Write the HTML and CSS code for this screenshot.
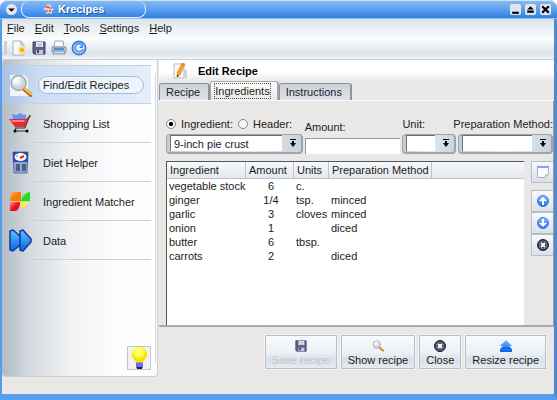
FILE: index.html
```html
<!DOCTYPE html>
<html lang="en">
<head>
<meta charset="utf-8">
<title>Krecipes</title>
<link rel="stylesheet" href="styles.css">
</head>
<body>
<svg class="defs" aria-hidden="true">
  <defs>
    <linearGradient id="blue" x2="0" y2="1"><stop stop-color="#8fc6ff"/><stop offset="1" stop-color="#1f6ce0"/></linearGradient>
    <linearGradient id="arrow" x2="0" y2="1"><stop stop-color="#62c0ff"/><stop offset="1" stop-color="#0a62e8"/></linearGradient>
    <linearGradient id="orange" x2="1" y2="1"><stop stop-color="#ffb080"/><stop offset=".5" stop-color="#ff7a00"/></linearGradient>
    <linearGradient id="green" x2="1" y2="1"><stop stop-color="#c8ffc0"/><stop offset=".5" stop-color="#1fe01f"/></linearGradient>
    <linearGradient id="red" x2="1" y2="1"><stop stop-color="#ff9a9a"/><stop offset=".5" stop-color="#f01010"/></linearGradient>
    <radialGradient id="glass" cx=".4" cy=".35"><stop stop-color="#fff"/><stop offset="1" stop-color="#c9d3d6"/></radialGradient>
    <radialGradient id="bulb" cx=".45" cy=".3"><stop stop-color="#ffffc0"/><stop offset=".6" stop-color="#ffff30"/><stop offset="1" stop-color="#f2e600"/></radialGradient>
    <symbol id="floppy" viewBox="0 0 14 14">
      <path d="M1 1h12v12H2l-1-1z" fill="#5a6288" stroke="#3c4266"/>
      <path d="M4 1h7v5H4z" fill="#e8ebf5"/><path d="M5 3h5M5 5h5" stroke="#a9b0cc"/>
      <path d="M4 9h7v4H4z" fill="#c3c8dc"/><path d="M5 9h2v3H5z" fill="#3c4266"/>
    </symbol>
    <symbol id="magnifier" viewBox="0 0 24 24">
      <path d="M15 15l7 6" stroke="#b86a10" stroke-width="4" stroke-linecap="round"/>
      <path d="M16 15l6 5" stroke="#ffc050" stroke-width="2" stroke-linecap="round"/>
      <circle cx="9.500" cy="9" r="7.500" fill="url(#glass)" stroke="#a3abae" stroke-width="1.500"/>
      <path d="M5 9a5 5 0 0 1 5-5" fill="none" stroke="#fff" stroke-width="2"/>
    </symbol>
    <symbol id="cancel" viewBox="0 0 12 12">
      <circle cx="6" cy="6" r="5.500" fill="#34344e" stroke="#1f1f36"/><circle cx="6" cy="6" r="4" fill="none" stroke="#77778f"/>
      <path d="M4 4l4 4M8 4l-4 4" stroke="#fff" stroke-width="2"/>
    </symbol>
    <symbol id="combo-arrow" viewBox="0 0 8 8"><path d="M1 0h6v1H1zM3 2h2v2h2L4 8 1 4h2z" fill="#000"/></symbol>
  </defs>
</svg>

<div class="window">
  <header class="titlebar">
    <button class="window-menu" aria-label="Window menu"><svg viewBox="0 0 10 10"><path d="M2 4h6L5 7z"/></svg></button>
    <div class="caption">
      <svg viewBox="0 0 11 11"><path d="M3 1l3-1 3 2v2l2 1-2 2v3l-3-1-3 1V7L0 5l3-2z" fill="#f3cfc8"/><path d="M3 2h3v2H3zM6 6h2v2H6z" fill="#d06a58"/><path d="M6 3h3v2H6zM3 6h2v2H3z" fill="#a98ab8"/></svg>
      <h1>Krecipes</h1>
    </div>
    <div class="window-buttons">
      <button aria-label="Minimize"><svg viewBox="0 0 10 10"><path d="M2 7h6v2H2z"/></svg></button>
      <button aria-label="Maximize"><svg viewBox="0 0 10 10"><path d="M5 2l3 3H2zM2 6h6v2H2z"/></svg></button>
      <button aria-label="Close window"><svg viewBox="0 0 10 10"><path d="M2 2l6 6M8 2L2 8" stroke="#000" stroke-width="2"/></svg></button>
    </div>
  </header>

  <div class="bars">
    <nav class="menubar" aria-label="Menu">
      <a href="#"><u>F</u>ile</a><a href="#"><u>E</u>dit</a><a href="#"><u>T</u>ools</a><a href="#"><u>S</u>ettings</a><a href="#"><u>H</u>elp</a>
    </nav>
    <div class="toolbar">
      <span class="grip"></span>
      <button aria-label="New recipe"><svg viewBox="0 0 16 16"><path d="M2 1h8l3 4v10H2z" fill="#f7f9ff" stroke="#a9b0c8"/><path d="M10 1v4h3" fill="#d5dbea" stroke="#a9b0c8"/><circle cx="11" cy="10" r="4" fill="#ffe08a"/><circle cx="11" cy="10" r="2" fill="#f3a62c"/></svg></button>
      <button aria-label="Save"><svg viewBox="0 0 16 16"><use href="#floppy" x="1" y="1" width="14" height="14"/></svg></button>
      <button aria-label="Print"><svg viewBox="0 0 16 16"><path d="M4 1h8l1 6H3z" fill="#f5faff" stroke="#9aa8ba"/><path d="M1 7h14v5H1z" fill="#b9c0ca" stroke="#8d95a1"/><path d="M3 8h10v2H3z" fill="#4d8fd8"/><path d="M3 11h10l1 3H2z" fill="#b9defc" stroke="#8498b0"/></svg></button>
      <button aria-label="Reload"><svg viewBox="0 0 16 16"><circle cx="8" cy="8" r="6.500" fill="#eaf4ff" stroke="#3f80e2" stroke-width="2"/><path d="M11 5a4 4 0 1 0 1 4" fill="none" stroke="#5c9cf0" stroke-width="2"/><path d="M12 4v4H8z" fill="#3f80e2"/></svg></button>
    </div>
  </div>

  <div class="workspace">
    <aside class="sidebar">
      <nav aria-label="Sections">
        <a class="section current" href="#">
          <svg viewBox="0 0 24 24"><path d="M2 2h15l3 4v17H2z" fill="#eef4ff"/><use href="#magnifier" x="1" y="1" width="24" height="24"/></svg>
          <span>Find/Edit Recipes</span></a>
        <a class="section" href="#">
          <svg viewBox="0 0 24 24"><path d="M4 2l5 1 3-2 4 2 2-1v6H5z" fill="#6d94f4"/><path d="M1 7h17l4-4 1 1-4 5-2 6H7z" fill="#e02a35"/><path d="M3 8h14l-1 2H5z" fill="#ff8585"/><path d="M22 3l-5 13H7M8 16l-1 3h12" fill="none" stroke="#333"/><circle cx="7" cy="19" r="1.500"/><circle cx="19" cy="19" r="1.500"/></svg>
          <span>Shopping List</span></a>
        <a class="section" href="#">
          <svg viewBox="0 0 24 24"><path d="M5 1h15l-1 21H6z" fill="#8fa5d2" stroke="#5c70ac"/><path d="M5 1h15v10H5z" fill="#2a4da4"/><ellipse cx="12.500" cy="6" rx="6" ry="4" fill="#fff"/><path d="M12 7l4-2" stroke="#e02020" stroke-width="2"/><path d="M8 6l2-2" stroke="#6a7cb0"/><path d="M8 13h4v7H8zM14 13h4v7h-4z" fill="#4e5c88"/></svg>
          <span>Diet Helper</span></a>
        <a class="section" href="#">
          <svg viewBox="0 0 24 24"><path d="M3 2h10v9H2q0-5 1-9z" fill="url(#orange)"/><path d="M13 11q0-8 9-9v9z" fill="url(#green)"/><path d="M2 12h10q0 7-4 9H2z" fill="url(#red)"/><path d="M13 12h7q-1 5-7 6z" fill="#fff12a"/></svg>
          <span>Ingredient Matcher</span></a>
        <a class="section" href="#">
          <svg viewBox="0 0 24 24"><path d="M2 2l3-1 7 6V2l3-1 8 9v3l-8 9-3-1v-5l-7 6-3-1z" fill="url(#arrow)" stroke="#0b3c9c" stroke-width="1.500" stroke-linejoin="round"/><path d="M12 7v9" stroke="#0b3c9c" stroke-width="1.500"/></svg>
          <span>Data</span></a>
      </nav>
      <button class="tip" aria-label="Tip of the day"><svg viewBox="0 0 20 22"><path d="M7 15h7v6l-2 1H9l-2-1z" fill="#6a6af0"/><path d="M8 20h5v2H8z" fill="#222244"/><path d="M10.500 0C6 0 3 3 3 7.500c0 4 3 5 4 8h7c1-3 4-4 4-8C18 3 15 0 10.500 0z" fill="url(#bulb)"/></svg></button>
    </aside>

    <main>
      <div class="heading">
        <svg viewBox="0 0 16 16"><path d="M2 1h10v14H2z" fill="#fcfcff" stroke="#b9bdc9"/><path d="M12 5l3 3v7h-3z" fill="#d0d2da"/><path d="M10 0l3 1-5 11-3 2V10z" fill="#f7a51c" stroke="#c97310" stroke-width=".5"/><path d="M10 0l3 1-1 2-3-1z" fill="#e7796c"/><path d="M5 12v2l2-1z" fill="#222"/></svg>
        <h2>Edit Recipe</h2>
      </div>
      <div class="tabs" role="tablist">
        <button role="tab">Recipe</button><button role="tab" class="selected" aria-selected="true"><span>Ingredients</span></button><button role="tab">Instructions</button>
      </div>
      <div class="pane">
        <form class="entry">
          <div class="field ingredient">
            <div class="kinds">
              <input type="radio" name="kind" id="kind-ingredient" checked><label for="kind-ingredient">Ingredient:</label>
              <input type="radio" name="kind" id="kind-header"><label for="kind-header">Header:</label>
            </div>
            <div class="combo"><select aria-label="Ingredient"><option>9-inch pie crust</option></select><svg><use href="#combo-arrow"/></svg></div>
          </div>
          <div class="field amount"><label for="amount">Amount:</label><input type="text" id="amount"></div>
          <div class="field unit"><label for="unit">Unit:</label>
            <div class="combo"><select id="unit"><option></option></select><svg><use href="#combo-arrow"/></svg></div></div>
          <div class="field method"><label for="method">Preparation Method:</label>
            <div class="combo"><select id="method"><option></option></select><svg><use href="#combo-arrow"/></svg></div></div>
        </form>
        <div class="listing">
          <div class="list">
            <table>
              <colgroup><col class="c-name"><col class="c-amount"><col class="c-units"><col class="c-method"><col></colgroup>
              <thead><tr><th>Ingredient</th><th>Amount</th><th>Units</th><th>Preparation Method</th><th></th></tr></thead>
              <tbody>
                <tr><td>vegetable stock</td><td>6</td><td>c.</td><td></td><td></td></tr>
                <tr><td>ginger</td><td>1/4</td><td>tsp.</td><td>minced</td><td></td></tr>
                <tr><td>garlic</td><td>3</td><td>cloves</td><td>minced</td><td></td></tr>
                <tr><td>onion</td><td>1</td><td></td><td>diced</td><td></td></tr>
                <tr><td>butter</td><td>6</td><td>tbsp.</td><td></td><td></td></tr>
                <tr><td>carrots</td><td>2</td><td></td><td>diced</td><td></td></tr>
              </tbody>
            </table>
          </div>
          <div class="tools">
            <button class="add" aria-label="Add ingredient"><svg viewBox="0 0 12 12"><path d="M.5.500h11v8l-3 3h-8z" fill="#fafaff" stroke="#a9adba"/><path d="M0 0h12v2H0z" fill="#7fa6ee"/><path d="M8 12V8h4z" fill="#c2c5cf"/></svg></button>
            <button aria-label="Move up"><svg viewBox="0 0 12 12"><circle cx="6" cy="6" r="5.500" fill="url(#blue)" stroke="#3c78dc"/><path d="M6 2l4 4H7v4H5V6H2z" fill="#fff"/></svg></button>
            <button aria-label="Move down"><svg viewBox="0 0 12 12"><circle cx="6" cy="6" r="5.500" fill="url(#blue)" stroke="#3c78dc"/><path d="M6 10l4-4H7V2H5v4H2z" fill="#fff"/></svg></button>
            <button aria-label="Remove"><svg><use href="#cancel"/></svg></button>
          </div>
        </div>
      </div>
      <footer class="actions">
        <button disabled><svg><use href="#floppy"/></svg>Save recipe</button>
        <button><svg><use href="#magnifier"/></svg>Show recipe</button>
        <button><svg><use href="#cancel"/></svg>Close</button>
        <button><svg viewBox="0 0 12 12"><path d="M6 0l6 6H9l3 3v3H0V9l3-3H0z" fill="url(#arrow)"/><path d="M1 8h10" stroke="#1259c4"/></svg>Resize recipe</button>
      </footer>
    </main>
  </div>
</div>
</body>
</html>
```
FILE: styles.css
```css
* { box-sizing: border-box; }
body {
  margin: 0;
  background: #fff;
  color: #1c1c1c;
  font: 11px/14px "Liberation Sans", Arial, sans-serif;
}
button, input, select { font: inherit; color: inherit; margin: 0; padding: 0; }
button { border: 0; background: none; }
a { color: inherit; text-decoration: none; }
h1, h2 { margin: 0; font-size: 11px; line-height: 14px; }
svg { display: block; flex: none; }
.defs { position: absolute; width: 0; height: 0; }

.window {
  display: flex;
  flex-direction: column;
  min-height: 100vh;
  border: solid #559ce9;
  border-width: 0 3px 6px 2px;
  border-bottom-color: #569fee;
  border-right-color: #4a8bd4;
  border-radius: 8px 8px 0 0;
  background: #e9e8e6;
}

.titlebar {
  display: flex;
  align-items: center;
  height: 19px;
  margin: 0 -3px 0 -2px;
  padding: 0 6px;
  border-top: 1px solid #d3e4f7;
  border-bottom: 1px solid #8dbcf0;
  border-radius: 8px 8px 0 0;
  background: linear-gradient(#86b9f2, #5a9ff0 50%, #2f80de);
}
.window-menu { width: 11px; height: 11px; border-radius: 6px; background: #e4e8ee; }
.window-menu svg { width: 11px; height: 11px; }
.caption {
  display: flex;
  align-items: center;
  gap: 4px;
  width: 125px;
  height: 17px;
  margin-left: 4px;
  padding-left: 21px;
  border: 1px solid #e4f0fd;
  border-top: 0;
  border-radius: 8px;
  color: #fff;
  text-shadow: 1px 1px 1px #1c4f94;
}
.caption svg { width: 11px; height: 11px; }
.window-buttons { display: flex; gap: 4px; margin-left: auto; }
.window-buttons button { width: 11px; height: 11px; border-radius: 2px; background: #dfe5ec; }
.window-buttons svg { width: 11px; height: 11px; }

.bars {
  height: 41px;
  border-bottom: 1px solid #c6ced6;
  background: linear-gradient(#dce4ea, #fcfdfe 50%, #dae2e8 88%, #f4f6f8);
}
.menubar { display: flex; gap: 10px; padding: 2px 5px; }
.toolbar { display: flex; align-items: center; gap: 4px; height: 22px; padding: 0 2px; }
.toolbar svg { width: 16px; height: 16px; }
.grip { width: 3px; height: 14px; background: #cdd1d4; }

.workspace { display: flex; flex: 1; }
.sidebar {
  position: relative;
  display: flex;
  flex-direction: column;
  flex: 0 0 156px;
  margin-bottom: 17px;
  padding-top: 5px;
  border: solid #cbd0d6;
  border-width: 0 1px 1px 0;
  border-radius: 4px;
  background: linear-gradient(90deg, #b1bbc4, #d5dadf 18%, #eff1f3 42%, #fdfdfe 75%);
}
.sidebar::after {
  content: "";
  position: absolute;
  top: 13px;
  right: 1px;
  bottom: 13px;
  border-right: 1px solid #cfd6de;
}
.section {
  display: flex;
  align-items: center;
  gap: 6px;
  height: 39px;
  margin-right: 6px;
  padding-left: 6px;
  background: linear-gradient(#cbd1d9, #cbd1d9) right bottom / 120px 1px no-repeat;
}
.section svg { width: 24px; height: 24px; }
.section span { padding: 1px 4px; border: 1px solid transparent; }
.current {
  background:
    linear-gradient(#cbd1d9, #cbd1d9) right top / 120px 1px no-repeat,
    linear-gradient(#cbd1d9, #cbd1d9) right bottom / 120px 1px no-repeat,
    linear-gradient(90deg, #a9c1df, #cbdef4 25%, #e5effb);
}
.current span {
  flex: 1;
  margin-right: 7px;
  border-color: #a4bcdc;
  border-radius: 9px;
  background: #edf4fc;
}
.tip {
  width: 24px;
  height: 24px;
  margin: auto 6px 6px auto;
  border: 1px solid #c3c5c8;
  background: #f1f1f3;
}
.tip svg { width: 20px; height: 22px; margin: auto; }

main { display: flex; flex-direction: column; flex: 1; min-width: 0; padding-left: 1px; }
.heading {
  display: flex;
  align-items: center;
  gap: 10px;
  height: 21px;
  padding-left: 13px;
  background: linear-gradient(#fff 60%, #e9e8e6);
  color: #000;
}
.heading svg { width: 16px; height: 16px; }
.tabs { display: flex; align-items: flex-end; height: 20px; border-bottom: 1px solid #fafafa; }
.tabs button {
  height: 17px;
  padding: 0 8px 0 6px;
  border: 1px solid #8d939b;
  border-width: 1px 2px 0 1px;
  border-radius: 3px 3px 0 0;
  background: linear-gradient(#cbd2da, #dde2e8);
}
.tabs .selected {
  height: 19px;
  padding: 0 6px 0 3px;
  border-color: #a4a6a8;
  background: linear-gradient(#fff, #e9e8e6);
}
.selected span { display: block; border: 1px dotted #555; }

.pane {
  display: flex;
  flex-direction: column;
  flex: 1;
  padding: 16px 0 0 7px;
  border-right: 1px solid #9d9d9d;
  border-bottom: 2px solid #a9a9a9;
}
.entry { display: flex; align-items: flex-end; gap: 2px; }
.field { display: flex; flex-direction: column; gap: 3px; min-width: 0; white-space: nowrap; }
.ingredient { flex: 137; }
.amount { flex: 96; gap: 4px; }
.unit { flex: 54; }
.method { flex: 95; }
.method label { align-self: flex-end; }
.kinds { display: flex; align-items: center; gap: 5px; }
input[type="radio"] {
  appearance: none;
  width: 10px;
  height: 10px;
  border: 1px solid #85888c;
  border-radius: 50%;
  background: #f7f8fa;
}
input[type="radio"]:checked { background: radial-gradient(#000 30%, #f7f8fa 45%); }
input[type="text"] { width: 100%; height: 16px; border: 1px solid #999; border-width: 1px 0 0 1px; background: #fff; }
.combo {
  display: flex;
  align-items: center;
  height: 20px;
  padding: 1px 4px 2px 3px;
  border: 1px solid #a0a4a9;
  border-width: 1px 2px 2px 1px;
  border-radius: 4px;
  background: linear-gradient(90deg, #c3ccd6, #e3eaf1 50%, #cbd4de);
}
.combo select {
  appearance: none;
  flex: 1;
  min-width: 0;
  height: 16px;
  padding: 0 3px;
  border: 1px solid #6c7076;
  border-width: 1px 0 0 1px;
  border-radius: 0;
  background: #fff;
}
.combo svg { width: 8px; height: 8px; margin-left: 7px; }

.listing { display: flex; flex: 1; gap: 7px; padding-top: 7px; }
.list { flex: 1; border: solid #555; border-width: 1px 0 0 1px; background: #fff; }
table { width: 100%; table-layout: fixed; border-spacing: 0; }
.c-name { width: 79px; }
.c-amount { width: 48px; }
.c-units { width: 35px; }
.c-method { width: 103px; }
th, td { height: 14px; padding: 0 0 0 2px; text-align: left; font-weight: normal; white-space: nowrap; }
th {
  height: 17px;
  padding-left: 3px;
  border: solid #bcc5cd;
  border-width: 0 1px 1px 0;
  background: linear-gradient(#f8fafb, #e0e8ee);
}
th:last-child { border-right: 0; }
td:nth-child(2) { text-align: center; }
.tools { display: flex; flex-direction: column; flex: 0 0 22px; }
.tools button {
  height: 22px;
  border: 1px solid #b5bdc5;
  border-right: 0;
  background: linear-gradient(#f7fafc, #d9e1e9);
}
.tools svg { width: 12px; height: 12px; margin: auto; }
.tools .add { margin-bottom: 7px; }

.actions { display: flex; justify-content: flex-end; gap: 4px; padding: 8px 8px 25px; }
.actions button {
  display: flex;
  flex-direction: column;
  align-items: center;
  gap: 1px;
  height: 34px;
  padding: 4px 6px 0;
  border: 1px solid #b9bfc6;
  outline: 1px solid #f3f3f2;
  background: linear-gradient(#f7f9fb, #eef2f6 50%, #d8e0e8 75%, #e6ebf0);
}
.actions svg { width: 12px; height: 12px; }
.actions button:disabled { color: #c3c7cc; }
```
